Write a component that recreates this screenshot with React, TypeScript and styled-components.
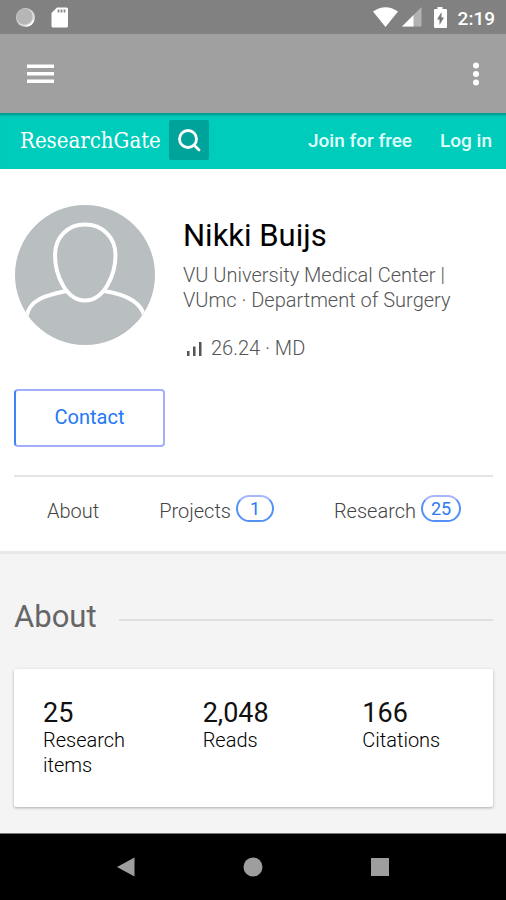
import React from "react";
import styled, { createGlobalStyle } from "styled-components";

const GlobalStyle = createGlobalStyle`
  *, *::before, *::after { box-sizing: border-box; }
  body {
    margin: 0;
    background: #f4f4f4;
    color: #111;
    font-family: Roboto, "Liberation Sans", sans-serif;
    font-size: 20px;
    line-height: 25px;
  }
  button {
    margin: 0;
    padding: 0;
    border: 0;
    background: none;
    color: inherit;
    font: inherit;
    cursor: pointer;
  }
  a { color: inherit; text-decoration: none; }
  h1, h2, p, dl, dt, dd { margin: 0; font-weight: 300; }
  svg { display: block; flex: none; }
`;

const Screen = styled.div`
  display: flex;
  flex-direction: column;
  min-height: 100vh;
`;

const StatusBar = styled.div`
  display: flex;
  align-items: center;
  justify-content: space-between;
  height: 34px;
  padding: 0 11px 0 15px;
  background: #818181;
  color: #fff;
`;

const StatusGroup = styled.div<{ $gap: number }>`
  display: flex;
  align-items: center;
  gap: ${({ $gap }) => $gap}px;
`;

const Clock = styled.time`
  padding-top: 2px;
  font-size: 19px;
  font-weight: 500;
`;

const AppBar = styled.header`
  display: flex;
  align-items: center;
  justify-content: space-between;
  height: 79px;
  padding: 0 20px;
  background: #a0a0a0;
  color: #fff;
`;

const IconButton = styled.button`
  display: grid;
  place-items: center;
  width: 40px;
  height: 40px;
  &:last-child { width: 20px; }
`;

const SiteBar = styled.nav`
  display: flex;
  align-items: center;
  height: 56px;
  padding: 0 14px 2px 20px;
  background: #00ccbb;
  box-shadow: inset 0 4px 3px -2px rgba(0, 70, 65, 0.4);
  color: #fff;
`;

const Brand = styled.a`
  font-family: "DejaVu Serif Condensed", "DejaVu Serif", serif;
  font-size: 22px;
`;

const SearchButton = styled.button`
  display: grid;
  place-items: center;
  width: 40px;
  height: 40px;
  margin-left: 8px;
  border-radius: 2px;
  background: #00a39a;
`;

const SiteLinks = styled.div`
  display: flex;
  gap: 28px;
  margin-left: auto;
  color: #e0fffc;
  font-weight: 500;
  font-size: 19px;
`;

const Profile = styled.section`
  padding: 36px 13px 0 14px;
  border-bottom: 3px solid #e8e8e8;
  background: #fff;
`;

const ProfileHead = styled.div`
  display: flex;
  gap: 28px;
  padding-left: 1px;
`;

const Details = styled.div`
  padding-top: 12px;
  color: #555;
  font-weight: 300;
`;

const Name = styled.h1`
  margin-bottom: 8px;
  color: #000;
  font-size: 31px;
  font-weight: 400;
  line-height: 38px;
`;

const Score = styled.p`
  display: flex;
  align-items: center;
  gap: 8px;
  margin-top: 23px;
  padding-left: 4px;
`;

const ContactButton = styled.button`
  width: 151px;
  height: 58px;
  margin: 28px 0;
  padding-bottom: 2px;
  border: 2px solid #a3aefc;
  border-left-color: #4183f6;
  border-radius: 4px;
  color: #2478f5;
`;

const Tabs = styled.nav`
  display: flex;
  justify-content: space-between;
  height: 76px;
  padding: 19px 32px 0 33px;
  border-top: 2px solid #e4e4e4;
`;

const Tab = styled.a`
  display: flex;
  gap: 5px;
  height: 28px;
  align-items: flex-end;
  color: #444;
  font-weight: 300;
`;

const Count = styled.span<{ $wide?: boolean }>`
  display: grid;
  place-items: center;
  align-self: flex-start;
  width: ${({ $wide }) => ($wide ? 40 : 38)}px;
  height: 27px;
  margin-top: -1px;
  border: 2px solid #5590f6;
  border-top-color: #a9b5fb;
  border-radius: 14px;
  color: #2b7af3;
  font-size: 18px;
  font-weight: 400;
  line-height: 22px;
`;

const About = styled.main`
  flex: 1;
  padding: 44px 13px 25px 14px;
`;

const SectionTitle = styled.h2`
  display: flex;
  align-items: center;
  gap: 22px;
  margin-bottom: 33px;
  color: #666;
  font-size: 31px;
  font-weight: 400;
  line-height: 38px;

  &::after {
    content: "";
    flex: 1;
    height: 2px;
    margin-top: 5px;
    background: #e0e0e0;
  }
`;

const StatCard = styled.dl`
  display: grid;
  grid-template-columns: repeat(3, 1fr);
  padding: 30px 0 29px;
  border-radius: 2px;
  background: #fff;
  box-shadow: 0 1px 3px rgba(0, 0, 0, 0.3);
`;

const Stat = styled.div`
  display: flex;
  flex-direction: column-reverse;
  justify-content: flex-end;
  padding: 0 40px 0 29px;
`;

const StatValue = styled.dd`
  font-size: 27px;
  font-weight: 400;
  line-height: 29px;
`;

const StatLabel = styled.dt`
  color: #000;
  font-weight: 300;
`;

const SystemNav = styled.footer`
  display: grid;
  grid-template-columns: repeat(3, 1fr);
  justify-items: center;
  align-items: center;
  height: 67px;
  padding: 0 63px;
  border-top: 1px solid #777;
  background: #000;
  color: #9e9e9e;
`;

const SystemButton = styled.button`
  display: grid;
  place-items: center;
  width: 20px;
  height: 40px;
`;

const stats = [
  { value: "25", label: "Research items" },
  { value: "2,048", label: "Reads" },
  { value: "166", label: "Citations" },
];

export default function App() {
  return (
    <>
      <GlobalStyle />
      <Screen>
        <StatusBar>
          <StatusGroup $gap={15}>
            <svg width="21" height="21" viewBox="0 0 21 21" aria-hidden="true">
              <circle cx="10.5" cy="10.5" r="9.5" fill="#d8d8d8" />
              <circle cx="9.5" cy="9.5" r="8" fill="#b6b6b6" />
              <path d="M18.500 13a9 9 0 0 1-7 6" fill="none" stroke="#fff" strokeWidth="1.500" />
            </svg>
            <svg width="17" height="21" viewBox="0 0 17 21" aria-hidden="true">
              <path d="M6 .5h9.500q1.500 0 1.500 1.500v17q0 1.500-1.500 1.500h-13.500Q.5 20.500.5 19V6z" fill="#fff" />
              <path d="M7.500 2.500v3M10.500 2.500v3M13.500 2.500v3" stroke="#888" strokeWidth="1.800" />
            </svg>
          </StatusGroup>
          <StatusGroup $gap={4}>
            <svg width="25" height="20" viewBox="0 0 25 20" aria-hidden="true">
              <path d="M0 4.500Q12.500-4 25 4.500L12.500 20z" fill="#fff" />
            </svg>
            <svg width="20" height="20" viewBox="0 0 20 20" aria-hidden="true">
              <path d="M0 19.500 19.500 0v19.500z" fill="#b2b2b2" />
              <path d="M0 19.500 11.500 8v11.500z" fill="#fff" />
            </svg>
            <svg width="28" height="21" viewBox="0 0 28 21" aria-hidden="true">
              <path d="M11.500 0h5v2H20q1 0 1 1v17q0 1-1 1H9q-1 0-1-1V3q0-1 1-1h2.500z" fill="#fff" />
              <path d="M15.500 5 11 12.500h2.500V18l4.500-7.500h-2.500z" fill="#777" />
            </svg>
            <Clock>2:19</Clock>
          </StatusGroup>
        </StatusBar>

        <AppBar>
          <IconButton aria-label="Open menu">
            <svg width="27" height="20" viewBox="0 0 27 20" fill="currentColor" aria-hidden="true">
              <path d="M0 .5h27V4H0zM0 8h27v3.500H0zM0 15.500h27V19H0z" />
            </svg>
          </IconButton>
          <IconButton aria-label="More options">
            <svg width="6" height="24" viewBox="0 0 6 24" fill="currentColor" aria-hidden="true">
              <circle cx="3" cy="3.500" r="3" />
              <circle cx="3" cy="12" r="3" />
              <circle cx="3" cy="20.500" r="3" />
            </svg>
          </IconButton>
        </AppBar>

        <SiteBar aria-label="Site">
          <Brand href="#home">ResearchGate</Brand>
          <SearchButton aria-label="Search">
            <svg width="24" height="24" viewBox="0 0 24 24" fill="none" stroke="currentColor" strokeWidth="2.800" aria-hidden="true">
              <circle cx="11" cy="11" r="8.500" />
              <path d="m17 17 5 5" strokeLinecap="round" />
            </svg>
          </SearchButton>
          <SiteLinks>
            <a href="#join">Join for free</a>
            <a href="#login">Log in</a>
          </SiteLinks>
        </SiteBar>

        <Profile>
          <ProfileHead>
            <svg width="140" height="140" viewBox="0 0 140 140" role="img" aria-label="Profile picture">
              <clipPath id="avatar-disc"><circle cx="70" cy="70" r="70" /></clipPath>
              <circle cx="70" cy="70" r="70" fill="#b9bec1" />
              <g clipPath="url(#avatar-disc)" fill="none" stroke="#fff" strokeWidth="4">
                <path d="M70 19.500C52 19.500 40 33 40 50C40 70 51 95.500 70 95.500S100.500 70 100.500 50C100.500 33 88 19.500 70 19.500z" />
                <path d="M51.500 86C35 89.500 14 93 11.500 112M89 86C105 88.500 126 94 129.500 112" />
              </g>
            </svg>
            <Details>
              <Name>Nikki Buijs</Name>
              <p>VU University Medical Center | VUmc · Department of Surgery</p>
              <Score>
                <svg width="16" height="15" viewBox="0 0 16 15" fill="#555" aria-hidden="true">
                  <path d="M0 10h2.500v5H0zM6 5.500h2.500V15H6zM12 1h2.500v14H12z" />
                </svg>
                26.24 · MD
              </Score>
            </Details>
          </ProfileHead>
          <ContactButton>Contact</ContactButton>
          <Tabs aria-label="Profile sections">
            <Tab href="#about">About</Tab>
            <Tab href="#projects">Projects<Count>1</Count></Tab>
            <Tab href="#research">Research<Count $wide>25</Count></Tab>
          </Tabs>
        </Profile>

        <About id="about">
          <SectionTitle>About</SectionTitle>
          <StatCard>
            {stats.map(({ value, label }) => (
              <Stat key={label}>
                <StatLabel>{label}</StatLabel>
                <StatValue>{value}</StatValue>
              </Stat>
            ))}
          </StatCard>
        </About>

        <SystemNav>
          <SystemButton aria-label="Back">
            <svg width="18" height="20" viewBox="0 0 18 20" fill="currentColor" aria-hidden="true"><path d="M0 10 17.500.5v19z" /></svg>
          </SystemButton>
          <SystemButton aria-label="Home">
            <svg width="20" height="20" viewBox="0 0 20 20" fill="currentColor" aria-hidden="true"><circle cx="10" cy="10" r="9.500" /></svg>
          </SystemButton>
          <SystemButton aria-label="Recent apps">
            <svg width="18" height="18" viewBox="0 0 18 18" fill="currentColor" aria-hidden="true"><path d="M0 0h18v18H0z" /></svg>
          </SystemButton>
        </SystemNav>
      </Screen>
    </>
  );
}
